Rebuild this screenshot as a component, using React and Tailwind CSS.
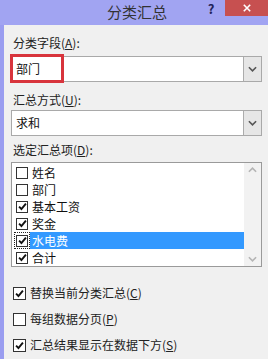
import React from "react";

const font = { fontFamily: '"Noto Sans CJK SC", "Noto Sans", sans-serif' };

function Check({ checked, size = "w-[13px] h-[13px]" }) {
  return (
    <span className={`${size} shrink-0 border border-[#333] bg-white flex items-center justify-center`}>
      {checked && (
        <svg viewBox="0 0 10 10" className="w-[9px] h-[9px]">
          <path d="M1.2 5.2 L3.8 7.8 L8.8 1.8" fill="none" stroke="#111" strokeWidth="2.1" />
        </svg>
      )}
    </span>
  );
}

function Chevron({ up }) {
  return (
    <svg viewBox="0 0 10 6" className="w-[9px] h-[6px]">
      <path d={up ? "M1 5 L5 1 L9 5" : "M1 1 L5 5 L9 1"} fill="none" stroke="currentColor" strokeWidth="1.8" />
    </svg>
  );
}

function Combo({ value }) {
  return (
    <div className="flex h-[26px] border border-[#a9a9a9] bg-white">
      <div className="flex-1 flex items-center pl-[4px] text-[12px] text-[#111]">{value}</div>
      <div className="w-[18px] flex items-center justify-center bg-[#e6e6e6] border-l border-[#acacac] text-[#555]">
        <Chevron />
      </div>
    </div>
  );
}

const items = [
  { label: "姓名", checked: false },
  { label: "部门", checked: false },
  { label: "基本工资", checked: true },
  { label: "奖金", checked: true },
  { label: "水电费", checked: true, selected: true },
  { label: "合计", checked: true },
];

export default function App() {
  return (
    <div className="w-[268px] h-[359px] flex flex-col overflow-hidden bg-[#a1a4f2]" style={font}>
      {/* title bar */}
      <div className="h-[25px] flex items-start shrink-0">
        <div className="w-[107px]" />
        <div className="w-[64px] h-[25px] flex items-center text-[15px] text-[#333]">分类汇总</div>
        <div className="flex-1" />
        <div className="w-[12px] h-[18px] mr-[8px] flex items-center justify-center text-[13px] leading-[18px] font-bold text-[#23235a]">
          ?
        </div>
        <div className="w-[43px] h-[16px] bg-[#c75050] flex items-center justify-center text-white">
          <svg viewBox="0 0 10 10" className="w-[8px] h-[8px]">
            <path d="M1 1 L9 9 M9 1 L1 9" stroke="#fff" strokeWidth="2" />
          </svg>
        </div>
      </div>

      <div className="flex-1 flex">
        <div className="w-[4px] bg-[#9a9df0]" />
        <div className="flex-1 bg-[#f0f0f0] pl-[7px] pr-[6px] flex flex-col text-[12px] text-[#222]">
          <div className="h-[16px] mt-[10px] pl-[2px] leading-[16px]">
            分类字段(<span className="underline">A</span>):
          </div>
          <div className="relative mt-[5px]">
            <Combo value="部门" />
            <div className="absolute left-[-1px] top-[-2px] w-[54px] h-[29px] border-[3px] border-[#d8343c]" />
          </div>

          <div className="h-[16px] mt-[10px] pl-[2px] leading-[16px]">
            汇总方式(<span className="underline">U</span>):
          </div>
          <div className="mt-[2px]">
            <Combo value="求和" />
          </div>

          <div className="h-[16px] mt-[6px] pl-[2px] leading-[16px]">
            选定汇总项(<span className="underline">D</span>):
          </div>
          <div className="mt-[4px] h-[105px] border border-[#9a9a9a] bg-white flex">
            <div className="flex-1 pt-[1px] pl-[2px]">
              {items.map((it) => (
                <div key={it.label} className="h-[17px] flex items-center">
                  <div
                    className={`w-[16px] h-[17px] flex items-center justify-center ${
                      it.selected ? "border border-dotted border-[#222]" : ""
                    }`}
                  >
                    <Check checked={it.checked} size="w-[12px] h-[12px]" />
                  </div>
                  <div
                    className={`flex-1 h-[17px] flex items-center pl-[2px] text-[12px] ${
                      it.selected ? "bg-[#3399ff] text-white" : "text-[#111]"
                    }`}
                  >
                    {it.label}
                  </div>
                </div>
              ))}
            </div>
            <div className="w-[17px] bg-[#f2f2f2] flex flex-col items-center justify-between py-[4px] text-[#b5b5b5]">
              <Chevron up />
              <Chevron />
            </div>
          </div>

          <div className="mt-[19px] flex flex-col gap-[12px] pl-[2px]">
            {[
              ["替换当前分类汇总", "C", true],
              ["每组数据分页", "P", false],
              ["汇总结果显示在数据下方", "S", true],
            ].map(([t, k, c]) => (
              <div key={k} className="h-[14px] flex items-center gap-[4px]">
                <Check checked={c} />
                <span className="leading-[14px]">
                  {t}(<span className="underline">{k}</span>)
                </span>
              </div>
            ))}
          </div>
        </div>
      </div>
    </div>
  );
}
